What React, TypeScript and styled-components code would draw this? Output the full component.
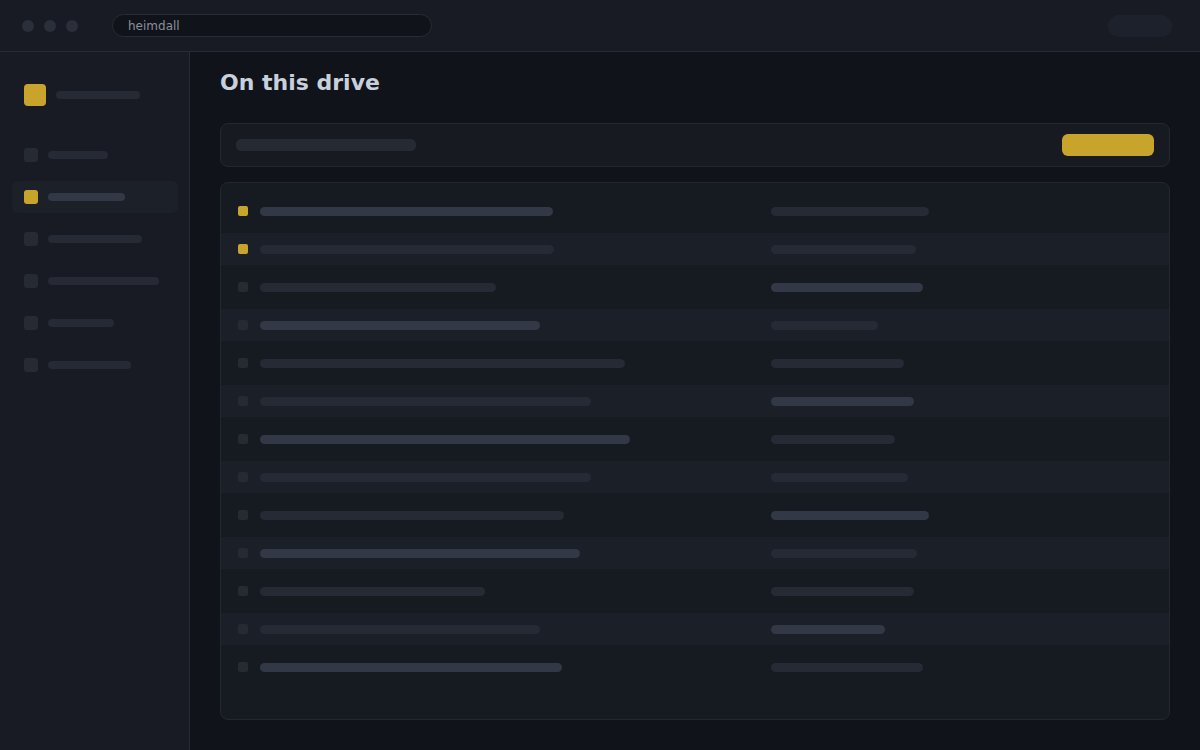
import React from "react";
import styled, { createGlobalStyle } from "styled-components";

const GlobalStyle = createGlobalStyle`
  html, body {
    margin: 0;
    padding: 0;
    background: #10131a;
    font-family: "DejaVu Sans", "Noto Sans", sans-serif;
  }
  * {
    box-sizing: border-box;
  }
`;

const navItems = [
  { width: 60, active: false },
  { width: 77, active: true },
  { width: 94, active: false },
  { width: 111, active: false },
  { width: 66, active: false },
  { width: 83, active: false },
];

const rows = [
  { name: 293, meta: 158 },
  { name: 294, meta: 145 },
  { name: 236, meta: 152 },
  { name: 280, meta: 107 },
  { name: 365, meta: 133 },
  { name: 331, meta: 143 },
  { name: 370, meta: 124 },
  { name: 331, meta: 137 },
  { name: 304, meta: 158 },
  { name: 320, meta: 146 },
  { name: 225, meta: 143 },
  { name: 280, meta: 114 },
  { name: 302, meta: 152 },
];

export default function App() {
  return (
    <>
      <GlobalStyle />
      <Window>
        <TopBar>
          <Dots>
            <Dot />
            <Dot />
            <Dot />
          </Dots>
          <Address>heimdall</Address>
          <Spacer />
          <UserPill />
        </TopBar>
        <Body>
          <Sidebar>
            <Brand>
              <Logo />
              <Bar $w={84} $h={8} />
            </Brand>
            <Nav>
              {navItems.map((item, i) => (
                <NavItem key={i} $active={item.active}>
                  <NavIcon $active={item.active} />
                  <Bar $w={item.width} $h={8} $bright={item.active} />
                </NavItem>
              ))}
            </Nav>
          </Sidebar>
          <Main>
            <Title>On this drive</Title>
            <Toolbar>
              <SearchStub />
              <PrimaryButton />
            </Toolbar>
            <FileList>
              {rows.map((r, i) => (
                <FileRow key={i} $striped={i % 2 === 1}>
                  <FileIcon $starred={i < 2} />
                  <Bar $w={r.name} $h={9} $bright={i % 3 === 0} />
                  <Bar $w={r.meta} $h={9} $bright={i % 3 === 2} />
                </FileRow>
              ))}
            </FileList>
          </Main>
        </Body>
      </Window>
    </>
  );
}

const Window = styled.div`
  width: 1200px;
  height: 750px;
  display: flex;
  flex-direction: column;
  background: #10131a;
  overflow: hidden;
`;

const TopBar = styled.header`
  height: 52px;
  flex-shrink: 0;
  display: flex;
  align-items: center;
  padding: 0 28px 0 22px;
  background: #181b23;
  border-bottom: 1px solid #272b35;
`;

const Dots = styled.div`
  display: flex;
  gap: 10px;
  margin-right: 34px;
`;

const Dot = styled.span`
  width: 12px;
  height: 12px;
  border-radius: 50%;
  background: #2a2f3a;
`;

const Address = styled.div`
  width: 320px;
  height: 23px;
  display: flex;
  align-items: center;
  padding-left: 15px;
  border: 1px solid #272c36;
  border-radius: 12px;
  background: #10131a;
  color: #8a909b;
  font-size: 12px;
`;

const Spacer = styled.div`
  flex: 1;
`;

const UserPill = styled.div`
  width: 64px;
  height: 22px;
  border-radius: 11px;
  background: #1c212b;
`;

const Body = styled.div`
  flex: 1;
  display: flex;
  min-height: 0;
`;

const Sidebar = styled.aside`
  width: 190px;
  flex-shrink: 0;
  padding: 32px 11px 0 12px;
  background: #181b23;
  border-right: 1px solid #262a33;
`;

const Brand = styled.div`
  display: flex;
  align-items: center;
  gap: 10px;
  padding-left: 12px;
  margin-bottom: 33px;
`;

const Logo = styled.div`
  width: 22px;
  height: 22px;
  border-radius: 4px;
  background: #c9a42c;
`;

const Nav = styled.nav`
  display: flex;
  flex-direction: column;
  gap: 10px;
`;

const NavItem = styled.div<{ $active?: boolean }>`
  height: 32px;
  display: flex;
  align-items: center;
  gap: 10px;
  padding-left: 12px;
  border-radius: 6px;
  background: ${({ $active }) => ($active ? "#1c2029" : "transparent")};
`;

const NavIcon = styled.span<{ $active?: boolean }>`
  width: 14px;
  height: 14px;
  border-radius: 3px;
  background: ${({ $active }) => ($active ? "#c9a42c" : "#252a33")};
`;

const Bar = styled.span<{ $w: number; $h: number; $bright?: boolean }>`
  display: block;
  width: ${({ $w }) => $w}px;
  height: ${({ $h }) => $h}px;
  border-radius: ${({ $h }) => $h / 2}px;
  background: ${({ $bright }) => ($bright ? "#323846" : "#252a34")};
`;

const Main = styled.main`
  flex: 1;
  display: flex;
  flex-direction: column;
  padding: 18px 30px 30px;
  min-width: 0;
`;

const Title = styled.h1`
  margin: 0 0 27px;
  font-size: 22px;
  line-height: 26px;
  font-weight: 700;
  color: #c8d0db;
`;

const Toolbar = styled.div`
  height: 44px;
  flex-shrink: 0;
  display: flex;
  align-items: center;
  justify-content: space-between;
  padding: 0 15px;
  margin-bottom: 15px;
  background: #171a21;
  border: 1px solid #232731;
  border-radius: 8px;
`;

const SearchStub = styled.div`
  width: 180px;
  height: 12px;
  border-radius: 5px;
  background: #252a33;
`;

const PrimaryButton = styled.div`
  width: 92px;
  height: 22px;
  border-radius: 6px;
  background: #c9a42c;
`;

const FileList = styled.section`
  flex: 1;
  display: flex;
  flex-direction: column;
  gap: 6px;
  padding-top: 12px;
  background: #161a21;
  border: 1px solid #232731;
  border-radius: 8px;
  overflow: hidden;
`;

const FileRow = styled.div<{ $striped?: boolean }>`
  height: 32px;
  flex-shrink: 0;
  display: grid;
  grid-template-columns: 10px 499px 1fr;
  column-gap: 12px;
  align-items: center;
  padding-left: 17px;
  background: ${({ $striped }) => ($striped ? "#1a1f28" : "transparent")};
`;

const FileIcon = styled.span<{ $starred?: boolean }>`
  width: 10px;
  height: 10px;
  border-radius: 2px;
  background: ${({ $starred }) => ($starred ? "#c9a42c" : "#252a33")};
`;
